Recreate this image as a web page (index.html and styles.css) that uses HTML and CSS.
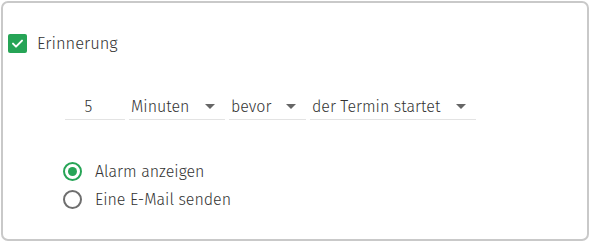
FILE: index.html
```html
<!DOCTYPE html>
<html lang="de">
<head>
<meta charset="utf-8">
<link rel="stylesheet" href="styles.css">
</head>
<body>
<div class="card">
  <label class="check-row">
    <span class="checkbox">
      <svg width="19" height="19" viewBox="0 0 19 19"><path d="M5 9.6 L8 12.6 L14 6.6" fill="none" stroke="#fff" stroke-width="2" stroke-linecap="round" stroke-linejoin="round"/></svg>
    </span>
    <span class="label">Erinnerung</span>
  </label>
  <div class="fields">
    <div class="field num">5</div>
    <div class="field sel w-min">Minuten<span class="caret"></span></div>
    <div class="field sel w-bev">bevor<span class="caret"></span></div>
    <div class="field sel w-ter">der Termin startet<span class="caret"></span></div>
  </div>
  <div class="radios">
    <div class="radio-row"><span class="radio on"></span><span>Alarm anzeigen</span></div>
    <div class="radio-row"><span class="radio"></span><span>Eine E-Mail senden</span></div>
  </div>
</div>
</body>
</html>
```
FILE: styles.css
```css
html, body { margin: 0; padding: 0; background: #fff; }
body { font-family: "Fira Sans", "Noto Sans", "Open Sans", sans-serif; font-weight: 300; color: #333; }
.card {
  margin: 1px;
  width: 584px;
  height: 236px;
  border: 2px solid #c9c9c9;
  border-radius: 7px;
  box-sizing: content-box;
  padding: 0;
}
.check-row { display: flex; align-items: center; margin: 30px 0 0 5px; height: 20px; }
.checkbox {
  width: 19px; height: 19px; background: #26a456; border-radius: 2px;
  display: flex; align-items: center; justify-content: center;
}
.label { margin-left: 10px; font-size: 16.5px; }
.fields { display: flex; margin: 40px 0 0 62px; gap: 4px; font-size: 16px; }
.field { height: 27px; border-bottom: 1px solid #e3e3e3; display: flex; align-items: center; box-sizing: border-box; padding-left: 2px; }
.num { width: 60px; justify-content: center; padding: 0 13px 0 0; }
.sel { position: relative; }
.w-min { width: 96px; }
.w-bev { width: 77px; }
.w-ter { width: 166px; }
.caret {
  position: absolute; right: 10px; top: 11px;
  width: 0; height: 0;
  border-left: 5px solid transparent; border-right: 5px solid transparent; border-top: 5px solid #666;
}
.radios { margin: 37px 0 0 60px; font-size: 16px; }
.radio-row { display: flex; align-items: center; height: 28px; }
.radio {
  width: 19px; height: 19px; border-radius: 50%; border: 2px solid #6e6e6e; box-sizing: border-box;
  margin-right: 13px; position: relative;
}
.radio.on { border-color: #26a456; }
.radio.on::after {
  content: ""; position: absolute; left: 3px; top: 3px; width: 9px; height: 9px; border-radius: 50%; background: #26a456;
}
```
